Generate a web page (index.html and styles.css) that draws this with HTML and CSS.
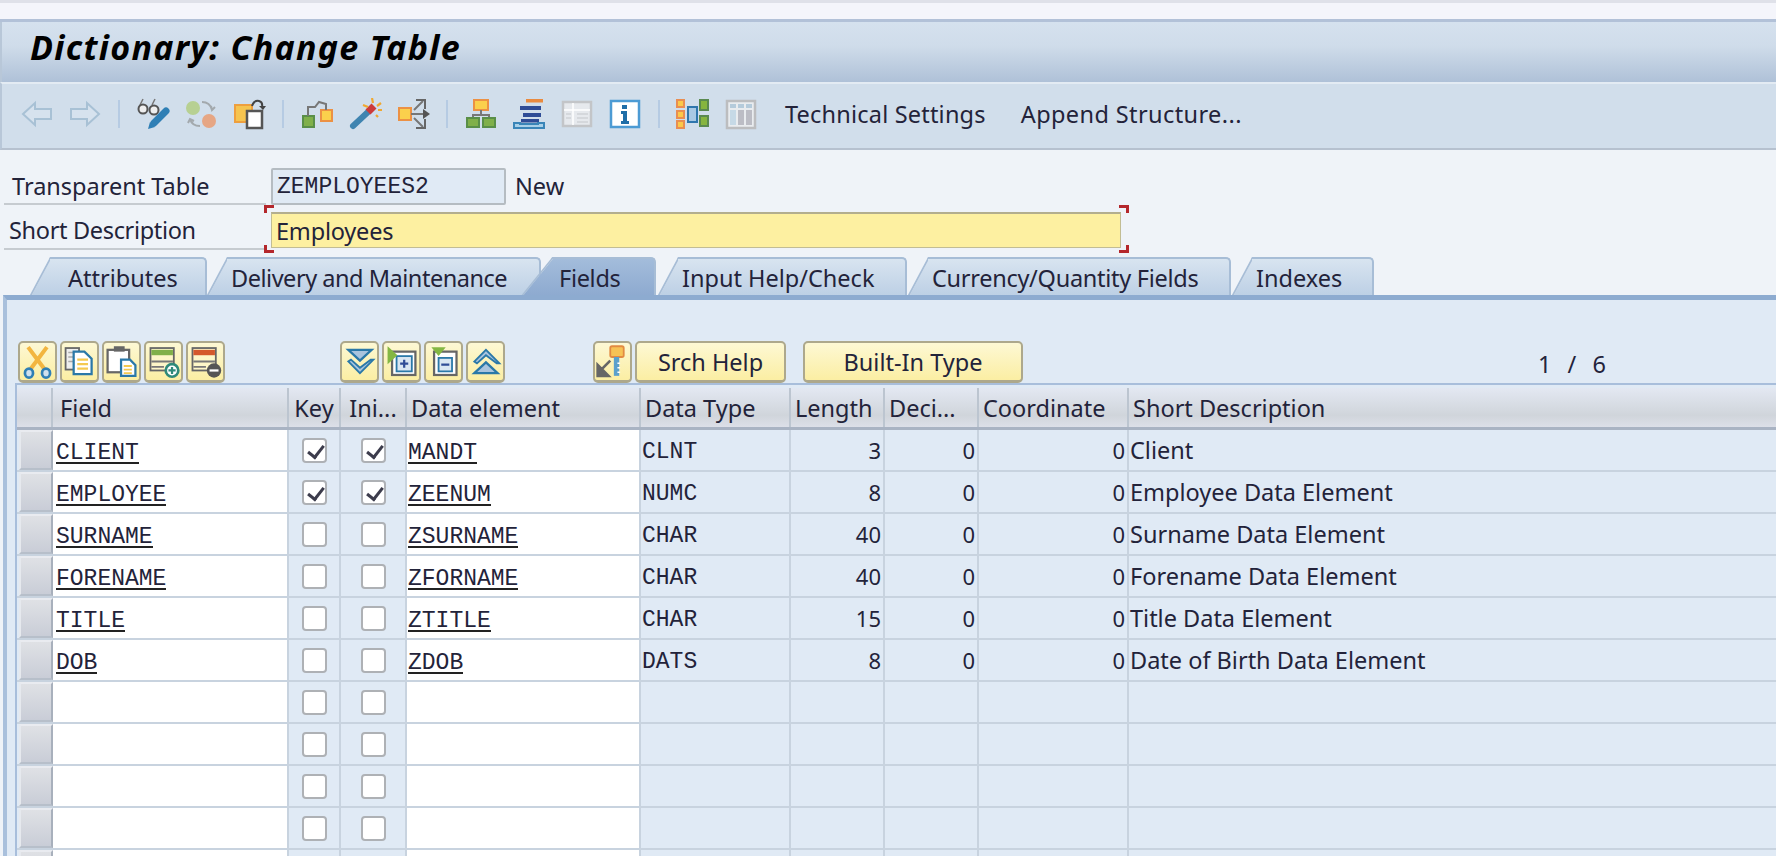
FILE: index.html
```html
<!DOCTYPE html>
<html lang="en">
<head>
<meta charset="utf-8">
<title>Dictionary: Change Table</title>
<link rel="stylesheet" href="styles.css">
</head>
<body>
<div class="topstrip"></div>
<header class="titlebar"><h1>Dictionary: Change Table</h1></header>
<nav class="toolbar">
  <span class="slot"><svg class="ti" viewBox="0 0 34 32"><path d="M3 16 15 5v6h16v10H15v6z" fill="#d6e2ee" stroke="#a8c1d5" stroke-width="2"/></svg></span>
  <span class="slot"><svg class="ti" viewBox="0 0 34 32"><path d="M31 16 19 5v6H3v10h16v6z" fill="#d6e2ee" stroke="#a8c1d5" stroke-width="2"/></svg></span>
  <span class="sep"></span>
  <span class="slot"><svg class="ti" viewBox="0 0 34 32"><path d="M4 7 7 1M16 7l3-6" stroke="#777" stroke-width="1.5" fill="none"/><circle cx="7" cy="11" r="4.5" fill="#eee" stroke="#555" stroke-width="2"/><circle cx="18" cy="12" r="4.5" fill="#eee" stroke="#555" stroke-width="2"/><path d="M30 13 18 25" stroke="#2f7fb5" stroke-width="7" stroke-linecap="round"/><path d="M14 24l5 5-7 2z" fill="#2f7fb5"/></svg></span>
  <span class="slot"><svg class="ti" viewBox="0 0 34 32"><circle cx="9" cy="10" r="7" fill="#b7d092"/><circle cx="25" cy="23" r="7" fill="#e6a684"/><path d="M18 4q8 0 10 8M27 8l1 4 3-3M16 28q-8 0-10-7M4 25l2-4 4 2" fill="none" stroke="#a3a9ad" stroke-width="2"/></svg></span>
  <span class="slot"><svg class="ti" viewBox="0 0 34 32"><rect x="3" y="7" width="17" height="17" fill="#f6c44f" stroke="#ee9f3e" stroke-width="2"/><rect x="15" y="13" width="15" height="17" fill="#fff" stroke="#555" stroke-width="2.5"/><path d="M20 8q2-6 7-5 4 1 3 6" fill="none" stroke="#444" stroke-width="2"/><path d="M27 8h7l-3 4z" fill="#444"/></svg></span>
  <span class="sep"></span>
  <span class="slot"><svg class="ti" viewBox="0 0 34 32"><rect x="3" y="18" width="11" height="11" fill="#80b04a" stroke="#5a8f48" stroke-width="2"/><rect x="21" y="12" width="11" height="11" fill="#fbd04c" stroke="#ec9144" stroke-width="2"/><path d="M8 18V9h7l4-5 7 2v6" fill="none" stroke="#777" stroke-width="2"/></svg></span>
  <span class="slot"><svg class="ti" viewBox="0 0 34 32"><path d="M5 28 20 14" stroke="#3f84b0" stroke-width="6" stroke-linecap="round"/><path d="M20 14 26 8" stroke="#cc3a3a" stroke-width="7"/><path d="M15 7l5 2M24 0l1 5M33 5l-4 3M34 12h-4M28 17l2 2" stroke="#f0a830" stroke-width="2.2" fill="none"/></svg></span>
  <span class="slot"><svg class="ti" viewBox="0 0 34 32"><rect x="3" y="10" width="12" height="12" fill="#fbd04c" stroke="#ec9144" stroke-width="2"/><path d="M15 16h14M18 12l9-9M18 20l9 9" stroke="#777" stroke-width="2" fill="none"/><path d="M20 2h9v9M20 30h9v-9" fill="none" stroke="#666" stroke-width="2"/><path d="M27 11l7 5-7 5z" fill="#555"/></svg></span>
  <span class="sep"></span>
  <span class="slot"><svg class="ti" viewBox="0 0 34 32"><rect x="10" y="2" width="14" height="10" fill="#fbd04c" stroke="#ec9144" stroke-width="2"/><path d="M17 12v5M9 20v-3h16v3" fill="none" stroke="#777" stroke-width="2"/><rect x="3" y="20" width="12" height="9" fill="#80b04a" stroke="#5a8f48" stroke-width="2"/><rect x="19" y="20" width="12" height="9" fill="#80b04a" stroke="#5a8f48" stroke-width="2"/></svg></span>
  <span class="slot"><svg class="ti" viewBox="0 0 34 32"><rect x="14" y="1" width="17" height="3.5" fill="#e98a3f"/><rect x="8" y="8" width="21" height="4" fill="#2f4c96"/><rect x="11" y="15" width="18" height="4" fill="#2f4c96"/><rect x="9" y="21" width="18" height="3.5" fill="#2f4c96"/><path d="M2 25v5h30v-5h-6v1H8v-1z" fill="#a9d0e8" stroke="#3a85b8" stroke-width="2"/></svg></span>
  <span class="slot"><svg class="ti" viewBox="0 0 34 32"><rect x="3" y="4" width="28" height="24" fill="#e6e9ed" stroke="#c3c5c8" stroke-width="2.5"/><path d="M4 12h26M13 5v22" stroke="#fff" stroke-width="1.5"/><path d="M6 16h5M6 20h5M17 16h11M17 20h11M17 24h11" stroke="#cfd2d6" stroke-width="1.6"/></svg></span>
  <span class="slot"><svg class="ti" viewBox="0 0 34 32"><rect x="3" y="3" width="28" height="26" fill="#fff" stroke="#4c9bd4" stroke-width="2.5"/><path d="M14 7h5v4h-5zM13 13h6v10h2v3h-8v-3h2v-7h-2z" fill="#1f6ea8"/></svg></span>
  <span class="sep"></span>
  <span class="slot"><svg class="ti" viewBox="0 0 34 32"><g fill="#fbc94a" stroke="#e98e52" stroke-width="2"><rect x="1" y="2" width="7" height="7"/><rect x="1" y="13" width="7" height="7"/><rect x="1" y="23" width="7" height="7"/></g><rect x="12" y="9" width="9" height="15" fill="#a9c9e4" stroke="#2f76ad" stroke-width="2"/><g fill="#86b53f" stroke="#5a8a50" stroke-width="2"><rect x="24" y="2" width="8" height="10"/><rect x="24" y="18" width="8" height="10"/></g></svg></span>
  <span class="slot"><svg class="ti" viewBox="0 0 34 32"><rect x="3" y="3" width="28" height="27" fill="#e9ecef" stroke="#bcbdbf" stroke-width="2.5"/><path d="M6 6h6v4H6zM14 6h6v4h-6zM22 6h6v4h-6z" fill="#b5cbdb"/><rect x="6" y="12" width="6" height="15" fill="#c6d9e6"/><rect x="14" y="12" width="6" height="15" fill="#bcbdc5"/><rect x="22" y="12" width="6" height="15" fill="#bcbdc5"/></svg></span>
  <span class="tb-text first">Technical Settings</span>
  <span class="tb-text second">Append Structure...</span>
</nav>

<section class="form">
  <div class="frow r1">
    <label class="flabel l1">Transparent Table</label>
    <div class="ro">ZEMPLOYEES2</div>
    <span class="state">New</span>
  </div>
  <div class="frow r2">
    <label class="flabel l2">Short Description</label>
    <div class="req"><div class="yel">Employees</div></div>
  </div>
</section>

<div class="tabs">
  <div class="tab t1">Attributes</div>
  <div class="tab t2">Delivery and Maintenance</div>
  <div class="tab t3 active">Fields</div>
  <div class="tab t4">Input Help/Check</div>
  <div class="tab t5">Currency/Quantity Fields</div>
  <div class="tab t6">Indexes</div>
</div>

<main class="panel">
  <div class="actions">
    <button class="ib"><svg viewBox="0 0 39 40"><path d="M9 4l18 24M30 4 12 28" stroke="#f2b540" stroke-width="4.5" fill="none"/><ellipse cx="10" cy="33" rx="4.5" ry="5" fill="#cfe0ee" stroke="#2f7fb5" stroke-width="3"/><ellipse cx="29" cy="33" rx="4.5" ry="5" fill="#cfe0ee" stroke="#2f7fb5" stroke-width="3"/></svg></button>
    <button class="ib"><svg viewBox="0 0 39 40"><rect x="4" y="5" width="15" height="24" fill="#eee" stroke="#666" stroke-width="2"/><path d="M7 10h6M7 15h6M7 20h6" stroke="#aaa" stroke-width="1.5"/><path d="M13 9h12l8 8v17H13z" fill="#fff" stroke="#2a78a8" stroke-width="2.5"/><path d="M17 18h12M17 23h12M17 28h12" stroke="#f5c94f" stroke-width="2.5"/></svg></button>
    <button class="ib"><svg viewBox="0 0 39 40"><rect x="4" y="7" width="24" height="25" fill="#fff" stroke="#666" stroke-width="2.5"/><rect x="11" y="3" width="12" height="6" fill="#666"/><path d="M19 18h10l6 6v12H19z" fill="#fff" stroke="#2a78a8" stroke-width="2.5"/><path d="M22 25h9M22 29h9M22 33h9" stroke="#f5c94f" stroke-width="2"/></svg></button>
    <button class="ib"><svg viewBox="0 0 39 40"><rect x="5" y="5" width="26" height="25" fill="#fdf6c8" stroke="#666" stroke-width="2"/><rect x="6" y="7" width="24" height="6" fill="#80b04a"/><path d="M6 20h24M6 26h14" stroke="#777" stroke-width="2"/><circle cx="29" cy="30" r="7" fill="#fff" stroke="#2f8a7a" stroke-width="3"/><path d="M29 26v8M25 30h8" stroke="#2f8a7a" stroke-width="2.5"/></svg></button>
    <button class="ib"><svg viewBox="0 0 39 40"><rect x="5" y="5" width="26" height="25" fill="#fdf6c8" stroke="#666" stroke-width="2"/><rect x="6" y="7" width="24" height="6" fill="#d4582c"/><path d="M6 20h24M6 26h14" stroke="#777" stroke-width="2"/><circle cx="29" cy="30" r="8" fill="#555"/><path d="M24 30h10" stroke="#fff" stroke-width="2.5"/></svg></button>
    <span class="gap1"></span>
    <button class="ib"><svg viewBox="0 0 39 40"><path d="M7 7h26L20 19z" fill="#a9c4de" stroke="#2a78a8" stroke-width="2.5"/><path d="M10 18l10 9 12-9h3L20 33 7 20z" fill="#a9c4de" stroke="#2a78a8" stroke-width="2"/></svg></button>
    <button class="ib"><svg viewBox="0 0 39 40"><rect x="9" y="9" width="26" height="26" fill="#fff" stroke="#666" stroke-width="2.5"/><rect x="14" y="14" width="17" height="17" fill="#d9e6f2" stroke="#2a78a8" stroke-width="2"/><path d="M22.500 18v9M18 22.500h9" stroke="#2f4c96" stroke-width="2.500"/><path d="M4 3l11 10-11 10z" fill="#84b743"/></svg></button>
    <button class="ib"><svg viewBox="0 0 39 40"><rect x="9" y="9" width="25" height="26" fill="#fff" stroke="#666" stroke-width="2.5"/><rect x="14" y="16" width="15" height="15" fill="#d9e6f2" stroke="#2a78a8" stroke-width="2"/><path d="M17 23.500h9" stroke="#2f4c96" stroke-width="2.500"/><path d="M6 4h16l-8 10z" fill="#84b743"/></svg></button>
    <button class="ib"><svg viewBox="0 0 39 40"><path d="M7 33h26L20 21z" fill="#a9c4de" stroke="#2a78a8" stroke-width="2.5"/><path d="M10 22l10-9 12 9h3L20 7 7 20z" fill="#a9c4de" stroke="#2a78a8" stroke-width="2"/></svg></button>
    <span class="gap2"></span>
    <button class="ib kb"><svg viewBox="0 0 39 40"><rect x="17" y="3" width="15" height="12" rx="2" fill="#f7c255" stroke="#e28a42" stroke-width="2"/><path d="M24 15v21" stroke="#5aa0cc" stroke-width="6"/><path d="M25 22h3M25 27h3M25 32h3" stroke="#fff" stroke-width="1.500"/><path d="M17 19 7 29M3 24v12h12z" stroke="#666" stroke-width="3" fill="#666"/></svg></button>
    <button class="tb b1">Srch Help</button>
    <button class="tb b2">Built-In Type</button>
    <span class="count">1 / 6</span>
  </div>

  <div class="grid">
    <div class="row head">
      <div class="c sel"></div><div class="c hf">Field</div><div class="c hk">Key</div><div class="c hk">Ini...</div><div class="c hd">Data element</div><div class="c hd">Data Type</div><div class="c hd">Length</div><div class="c hd">Deci...</div><div class="c hd">Coordinate</div><div class="c hd">Short Description</div>
    </div>
    <div class="row"><div class="c sb"></div><div class="c in f"><u>CLIENT</u></div><div class="c ck"><i class="box on"></i></div><div class="c ck"><i class="box on"></i></div><div class="c in d"><u>MANDT</u></div><div class="c m">CLNT</div><div class="c n">3</div><div class="c n">0</div><div class="c n">0</div><div class="c t">Client</div></div>
    <div class="row"><div class="c sb"></div><div class="c in f"><u>EMPLOYEE</u></div><div class="c ck"><i class="box on"></i></div><div class="c ck"><i class="box on"></i></div><div class="c in d"><u>ZEENUM</u></div><div class="c m">NUMC</div><div class="c n">8</div><div class="c n">0</div><div class="c n">0</div><div class="c t">Employee Data Element</div></div>
    <div class="row"><div class="c sb"></div><div class="c in f"><u>SURNAME</u></div><div class="c ck"><i class="box"></i></div><div class="c ck"><i class="box"></i></div><div class="c in d"><u>ZSURNAME</u></div><div class="c m">CHAR</div><div class="c n">40</div><div class="c n">0</div><div class="c n">0</div><div class="c t">Surname Data Element</div></div>
    <div class="row"><div class="c sb"></div><div class="c in f"><u>FORENAME</u></div><div class="c ck"><i class="box"></i></div><div class="c ck"><i class="box"></i></div><div class="c in d"><u>ZFORNAME</u></div><div class="c m">CHAR</div><div class="c n">40</div><div class="c n">0</div><div class="c n">0</div><div class="c t">Forename Data Element</div></div>
    <div class="row"><div class="c sb"></div><div class="c in f"><u>TITLE</u></div><div class="c ck"><i class="box"></i></div><div class="c ck"><i class="box"></i></div><div class="c in d"><u>ZTITLE</u></div><div class="c m">CHAR</div><div class="c n">15</div><div class="c n">0</div><div class="c n">0</div><div class="c t">Title Data Element</div></div>
    <div class="row"><div class="c sb"></div><div class="c in f"><u>DOB</u></div><div class="c ck"><i class="box"></i></div><div class="c ck"><i class="box"></i></div><div class="c in d"><u>ZDOB</u></div><div class="c m">DATS</div><div class="c n">8</div><div class="c n">0</div><div class="c n">0</div><div class="c t">Date of Birth Data Element</div></div>
    <div class="row"><div class="c sb"></div><div class="c in f"></div><div class="c ck"><i class="box"></i></div><div class="c ck"><i class="box"></i></div><div class="c in d"></div><div class="c m"></div><div class="c n"></div><div class="c n"></div><div class="c n"></div><div class="c t"></div></div>
    <div class="row"><div class="c sb"></div><div class="c in f"></div><div class="c ck"><i class="box"></i></div><div class="c ck"><i class="box"></i></div><div class="c in d"></div><div class="c m"></div><div class="c n"></div><div class="c n"></div><div class="c n"></div><div class="c t"></div></div>
    <div class="row"><div class="c sb"></div><div class="c in f"></div><div class="c ck"><i class="box"></i></div><div class="c ck"><i class="box"></i></div><div class="c in d"></div><div class="c m"></div><div class="c n"></div><div class="c n"></div><div class="c n"></div><div class="c t"></div></div>
    <div class="row"><div class="c sb"></div><div class="c in f"></div><div class="c ck"><i class="box"></i></div><div class="c ck"><i class="box"></i></div><div class="c in d"></div><div class="c m"></div><div class="c n"></div><div class="c n"></div><div class="c n"></div><div class="c t"></div></div>
    <div class="row"><div class="c sb"></div><div class="c in f"></div><div class="c ck"></div><div class="c ck"></div><div class="c in d"></div><div class="c m"></div><div class="c n"></div><div class="c n"></div><div class="c n"></div><div class="c t"></div></div>
  </div>
</main>
</body>
</html>
```

FILE: styles.css
```css
* { box-sizing: border-box; }
html, body { margin: 0; padding: 0; }
body {
  width: 1776px;
  height: 856px;
  overflow: hidden;
  background: #eff3f8;
  color: #23233a;
  font-family: "Noto Sans", "DejaVu Sans", sans-serif;
  font-size: 23.5px;
}

.topstrip {
  height: 22px;
  background: #f4f5fb;
  border-top: 3px solid #dfe1e9;
  border-bottom: 3px solid #b2c1d8;
}
.titlebar {
  height: 60px;
  background: linear-gradient(#d5e1ee, #cfdcea 40%, #afc1d8);
  border-left: 2px solid #b8c7d8;
  padding-left: 28px;
  display: flex;
  align-items: center;
}
.titlebar h1 {
  margin: 0 0 10px;
  font: italic bold 34px "Noto Sans", sans-serif;
  letter-spacing: 1.3px;
  color: #000;
}
.toolbar {
  height: 68px;
  background: #d1deeb;
  border-top: 2px solid #e3ebf3;
  border-bottom: 2px solid #b6c1cf;
  border-left: 2px solid #b8c7d8;
  padding: 0 0 4px 11px;
  display: flex;
  align-items: center;
}
.slot { width: 48px; display: flex; justify-content: center; }
.ti { width: 34px; height: 32px; display: block; }
.sep { width: 20px; display: flex; justify-content: center; }
.sep::before { content: ""; width: 2px; height: 28px; background: #b6cbe3; }
.tb-text { margin-left: 35px; }
.tb-text.first { margin-left: 20px; letter-spacing: 0.2px; }
.tb-text.second { letter-spacing: 0.4px; }

.form { padding-top: 16px; height: 107px; }
.frow { display: flex; align-items: flex-start; }
.r1 { height: 39px; }
.r2 { height: 48px; }
.flabel {
  width: 262px;
  margin-left: 4px;
  height: 39px;
  border-bottom: 2px solid #c6cbd0;
  display: flex;
  align-items: center;
}
.l1 { padding-left: 8px; padding-top: 3px; }
.l2 { padding-left: 5px; padding-top: 6px; height: 45px; letter-spacing: -0.33px; }
.ro {
  margin-left: 5px;
  width: 235px;
  height: 37px;
  margin-top: 2px;
  background: #e0eaf5;
  border: 2px solid #b5bcc2;
  border-radius: 2px;
  padding-left: 4px;
  display: flex;
  align-items: center;
  font-family: "Liberation Mono", monospace;
  font-size: 23px;
}
.state { margin-left: 9px; line-height: 40px; }
.req {
  margin-left: -2px;
  width: 865px;
  height: 48px;
  padding: 7px 8px 5px 7px;
  background:
    linear-gradient(#b4272c, #b4272c) 0 0 / 10px 3px no-repeat,
    linear-gradient(#b4272c, #b4272c) 0 0 / 3px 8px no-repeat,
    linear-gradient(#b4272c, #b4272c) 100% 0 / 10px 3px no-repeat,
    linear-gradient(#b4272c, #b4272c) 100% 0 / 3px 8px no-repeat,
    linear-gradient(#b4272c, #b4272c) 0 100% / 10px 3px no-repeat,
    linear-gradient(#b4272c, #b4272c) 0 100% / 3px 8px no-repeat,
    linear-gradient(#b4272c, #b4272c) 100% 100% / 10px 3px no-repeat,
    linear-gradient(#b4272c, #b4272c) 100% 100% / 3px 8px no-repeat;
}
.yel {
  height: 36px;
  background: #fdf0a1;
  border: 1px solid #c2bd94;
  border-top: 2px solid #b3ae8e;
  padding-left: 4px;
  display: flex;
  align-items: center;
  letter-spacing: -0.2px;
}

.tabs { display: flex; height: 38px; align-items: stretch; }
.tab {
  position: relative;
  background: linear-gradient(#d8e4f0, #bdd0e5);
  border-top: 2px solid #a7bdd6;
  border-right: 2px solid #a7bdd6;
  border-top-right-radius: 5px;
  display: flex;
  align-items: center;
  padding-top: 2px;
  padding-left: 4px;
  white-space: nowrap;
}
.tab::before {
  content: "";
  position: absolute;
  top: -2px;
  bottom: 0;
  left: -10px;
  width: 22px;
  z-index: -1;
  background: linear-gradient(#d8e4f0, #bdd0e5);
  border-left: 2px solid #a7bdd6;
  border-top: 2px solid #a7bdd6;
  transform: skewX(-28deg);
}
.tab.active { background: linear-gradient(#a3bcdb, #8eaad0); z-index: 2; }
.tab.active::before {
  left: -16px;
  width: 32px;
  background: linear-gradient(#a3bcdb, #8eaad0);
  transform: skewX(-39deg);
}
.t1 { margin-left: 50px; width: 157px; padding-left: 18px; }
.t2 { margin-left: 20px; width: 314px; letter-spacing: -0.47px; }
.t3 { margin-left: 12px; width: 103px; padding-left: 6px; letter-spacing: -0.3px; }
.t4 { margin-left: 22px; width: 229px; }
.t5 { margin-left: 21px; width: 303px; letter-spacing: -0.28px; }
.t6 { margin-left: 21px; width: 122px; }

.panel {
  height: 570px;
  background: #e0eaf5;
  border-top: 5px solid #8dabd0;
  border-left: 4px solid #a9c0dc;
  margin-left: 3px;
  overflow: hidden;
}
.actions {
  display: flex;
  align-items: flex-end;
  height: 83px;
  padding-left: 11px;
  gap: 3px;
}
.ib, .tb {
  height: 42px;
  padding: 0;
  background: linear-gradient(#fdf8d4, #fbeea3);
  border: 2px solid #ada88c;
  border-bottom-width: 3px;
  border-radius: 5px;
  font: inherit;
  color: inherit;
}
.ib { width: 39px; }
.ib svg { display: block; width: 100%; height: 100%; }
.gap1 { width: 109px; }
.gap2 { width: 82px; }
.kb { width: 39px; }
.tb.b1 { width: 151px; }
.tb.b2 { width: 220px; margin-left: 14px; }
.count {
  margin-left: 512px;
  align-self: flex-end;
  height: 42px;
  line-height: 46px;
  word-spacing: 10px;
}

.grid {
  margin-left: 8px;
  background: #e0eaf5;
  border-top: 2px solid #a8bedb;
  border-left: 2px solid #a8bedb;
  padding-top: 3px;
}
.row {
  display: grid;
  grid-template-columns: 34px 236px 52px 66px 234px 150px 94px 94px 150px 1fr;
  height: 42px;
  padding-left: 2px;
  border-bottom: 2px solid #c8d3df;
}
.row.head {
  height: 42px;
  background: linear-gradient(#e3e8f2, #d0d5db 70%, #dcdfe8);
  border-bottom: 3px solid #a9b3c3;
  padding-left: 0;
  grid-template-columns: 36px 236px 52px 66px 234px 150px 94px 94px 150px 1fr;
}
.c {
  display: flex;
  align-items: center;
  border-right: 2px solid #c8d3df;
  white-space: nowrap;
  overflow: hidden;
}
.head .c { border-right: 2px solid #bcc5d0; }
.head .c:last-child, .row .c:last-child { border-right: 0; }
.hf { padding-left: 7px; }
.hk { justify-content: center; }
.hd { padding-left: 4px; }
.sb {
  background: linear-gradient(#dfe1e5, #c9cdd7);
  border: 2px solid #b7bfca;
  border-left-color: #e6e9ee;
  border-top-color: #e9ebf0;
  border-right-color: #a8b0bc;
}
.in { background: #fff; }
.f { padding-left: 3px; }
.d { padding-left: 1px; }
.in u, .m {
  font-family: "Liberation Mono", monospace;
  font-size: 23px;
}
.in u {
  text-decoration: none;
  border-bottom: 2px solid #222;
  line-height: 18px;
  margin-top: 7px;
}
.m { padding: 3px 0 0 1px; }
.n {
  justify-content: flex-end;
  padding-right: 2px;
  font-size: 22px;
}
.t { padding-left: 1px; }
.ck { justify-content: center; }
.box {
  display: block;
  width: 25px;
  height: 25px;
  background: #fff;
  border: 2px solid #aeb1b5;
  border-radius: 4px;
  position: relative;
}
.box.on::after {
  content: "";
  position: absolute;
  left: 7px;
  top: 2px;
  width: 7px;
  height: 13px;
  border: solid #3c3c4c;
  border-width: 0 3px 3px 0;
  transform: rotate(38deg);
}
```
